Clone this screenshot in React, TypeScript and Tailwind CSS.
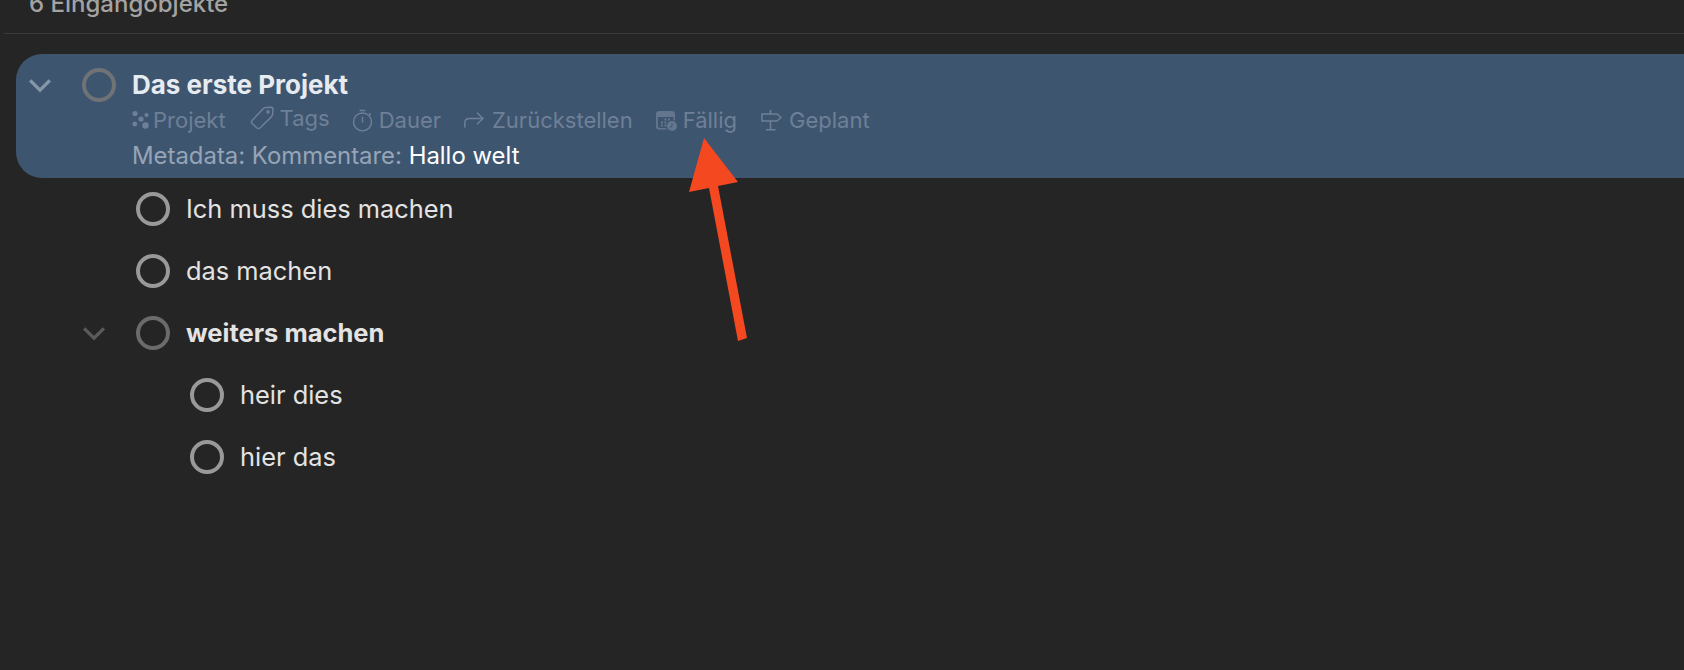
import React from "react";

const font = { fontFamily: "Inter, 'Liberation Sans', sans-serif" };

function Chevron({ className }: { className: string }) {
  return (
    <svg viewBox="0 0 24 16" className={className} fill="none" stroke="currentColor" strokeWidth="3.6">
      <path d="M1.5 2.5 L12 13 L22.5 2.5" />
    </svg>
  );
}

function Circle({ className }: { className: string }) {
  return <div className={`h-[34px] w-[34px] shrink-0 rounded-full border-[4px] ${className}`} />;
}

function ProjectIcon() {
  return (
    <svg viewBox="0 0 18 20" className="h-[20px] w-[18px]" fill="currentColor">
      <circle cx="3" cy="3.5" r="2.6" />
      <circle cx="14.5" cy="5" r="2" />
      <circle cx="9" cy="9" r="2.6" />
      <circle cx="2.8" cy="14" r="2.4" />
      <circle cx="13.5" cy="15.5" r="3.2" />
    </svg>
  );
}
function TagIcon() {
  return (
    <svg viewBox="0 0 24 24" className="h-[24px] w-[24px]" fill="none" stroke="currentColor" strokeWidth="1.5">
      <path d="M2 14.5 L13.5 2.5 Q14.5 1.5 16 1.5 L21 1.2 Q23 1.2 23 3 L22.6 8 Q22.6 9.5 21.5 10.6 L10 22 Q8.5 23 7 22 L2 17.5 Q1 16 2 14.5 Z" />
      <circle cx="18" cy="5.8" r="1.1" />
    </svg>
  );
}
function TimerIcon() {
  return (
    <svg viewBox="0 0 22 24" className="h-[23px] w-[21px]" fill="none" stroke="currentColor" strokeWidth="1.5">
      <circle cx="11" cy="13.5" r="9.4" />
      <path d="M8 1.5 H14 M18 4.5 L19.8 6.2 M11 8 V14" />
    </svg>
  );
}
function ArrowIcon() {
  return (
    <svg viewBox="0 0 20 16" className="h-[16px] w-[20px]" fill="none" stroke="currentColor" strokeWidth="1.5">
      <path d="M0.8 15.5 V11 Q0.8 6.5 5.5 6.5 H19 M13 0.8 L19 6.5 L13 12.2" />
    </svg>
  );
}
function CalendarIcon() {
  return (
    <svg viewBox="0 0 21 21" className="h-[21px] w-[21px] text-[#63768d]">
      <path fill="currentColor" fillRule="evenodd" d="M3 1 H16 Q19 1 19 4 V10.5 H17.5 V7 H1.8 V16 Q1.8 18 4 18 H10.5 V19.5 H3 Q0 19.5 0 16.5 V4 Q0 1 3 1 Z" />
      <g fill="currentColor">
        <rect x="8.5" y="8.5" width="2" height="2" />
        <rect x="12" y="8.5" width="2" height="2" />
        <rect x="5" y="11.5" width="2" height="2" />
        <rect x="8.5" y="11.5" width="2" height="2" />
        <rect x="5" y="14.5" width="2" height="2" />
        <rect x="8.5" y="14.5" width="2" height="2" />
        <circle cx="16" cy="16" r="5" />
      </g>
      <path d="M16 13.5 V16.2 L14 17.5" stroke="#3e5570" strokeWidth="1" fill="none" />
    </svg>
  );
}
function SignIcon() {
  return (
    <svg viewBox="0 0 22 22" className="h-[22px] w-[22px]" fill="none" stroke="currentColor" strokeWidth="1.5">
      <path d="M10.5 1 V5 M2 5 H17 L21 8.5 L17 12 H2 Z M10.5 12 V20.5 M6 20.8 H15.5" />
    </svg>
  );
}

function Meta({ icon, label, gap, className = "" }: { icon: React.ReactNode; label: string; gap: string; className?: string }) {
  return (
    <div className={`flex items-center ${gap} ${className}`}>
      {icon}
      <span>{label}</span>
    </div>
  );
}

function Row({
  label,
  indent,
  bold,
  chevron,
}: {
  label: string;
  indent: string;
  bold?: boolean;
  chevron?: boolean;
}) {
  return (
    <div className={`flex h-[62px] items-center ${indent}`}>
      {chevron && <Chevron className="mr-[30px] h-[15px] w-[24px] text-[#5a5a5a]" />}
      <Circle className={bold ? "border-[#6b6b6b]" : "border-[#999999]"} />
      <span className={`ml-[16px] text-[#e3e3e3] ${bold ? "text-[25.5px] font-bold" : "text-[25.4px] font-normal"}`}>{label}</span>
    </div>
  );
}

export default function App() {
  return (
    <div style={font} className="relative h-[670px] w-[1684px] overflow-hidden bg-[#252525]">
      <div className="flex h-[33px] items-end overflow-hidden pb-[17px] pl-[29px]">
        <span className="text-[24px] leading-none font-medium whitespace-nowrap text-[#a3a3a3]">6 Eingangobjekte</span>
      </div>
      <div className="ml-[4px] h-[1px] bg-[#3a3a3a]" />
      <div className="mt-[20px] ml-[16px] flex h-[124px] rounded-l-[26px] bg-[#3e5570]">
        <Chevron className="mt-[24px] ml-[12px] h-[15px] w-[24px] shrink-0 text-[#8496a8]" />
        <Circle className="mt-[14px] ml-[30px] border-[#6f7375]" />
        <div className="ml-[16px] flex flex-col">
          <div className="mt-[16px] h-[30px] text-[26px] leading-[30px] font-bold whitespace-nowrap text-[#e6ebf0]">Das erste Projekt</div>
          <div className="mt-[6px] flex h-[28px] items-center text-[22px] whitespace-nowrap text-[#6e8097]">
            <Meta icon={<ProjectIcon />} label="Projekt" gap="gap-[3px]" className="mr-[24px]" />
            <Meta icon={<TagIcon />} label="Tags" gap="gap-[6px]" className="mr-[22px] mb-[4px]" />
            <Meta icon={<TimerIcon />} label="Dauer" gap="gap-[6px]" className="mr-[23px]" />
            <Meta icon={<ArrowIcon />} label="Zurückstellen" gap="gap-[8px]" className="mr-[23px]" />
            <Meta icon={<CalendarIcon />} label="Fällig" gap="gap-[6px]" className="mr-[23px]" />
            <Meta icon={<SignIcon />} label="Geplant" gap="gap-[7px]" />
          </div>
          <div className="mt-[8px] text-[23.9px] leading-[28px] whitespace-nowrap text-[#96a5b6]">
            Metadata: Kommentare: <span className="text-white">Hallo welt</span>
          </div>
        </div>
      </div>
      <div className="flex flex-col">
        <Row label="Ich muss dies machen" indent="pl-[136px]" />
        <Row label="das machen" indent="pl-[136px]" />
        <Row label="weiters machen" indent="pl-[82px]" bold chevron />
        <Row label="heir dies" indent="pl-[190px]" />
        <Row label="hier das" indent="pl-[190px]" />
      </div>
      <svg className="absolute top-[136px] left-[686px] h-[208px] w-[64px]" viewBox="686 136 64 208">
        <path fill="#f44820" d="M704 138 L738 182 L718 186 L747 338 L738 341 L709 188 L689 192 Z" />
      </svg>
    </div>
  );
}
